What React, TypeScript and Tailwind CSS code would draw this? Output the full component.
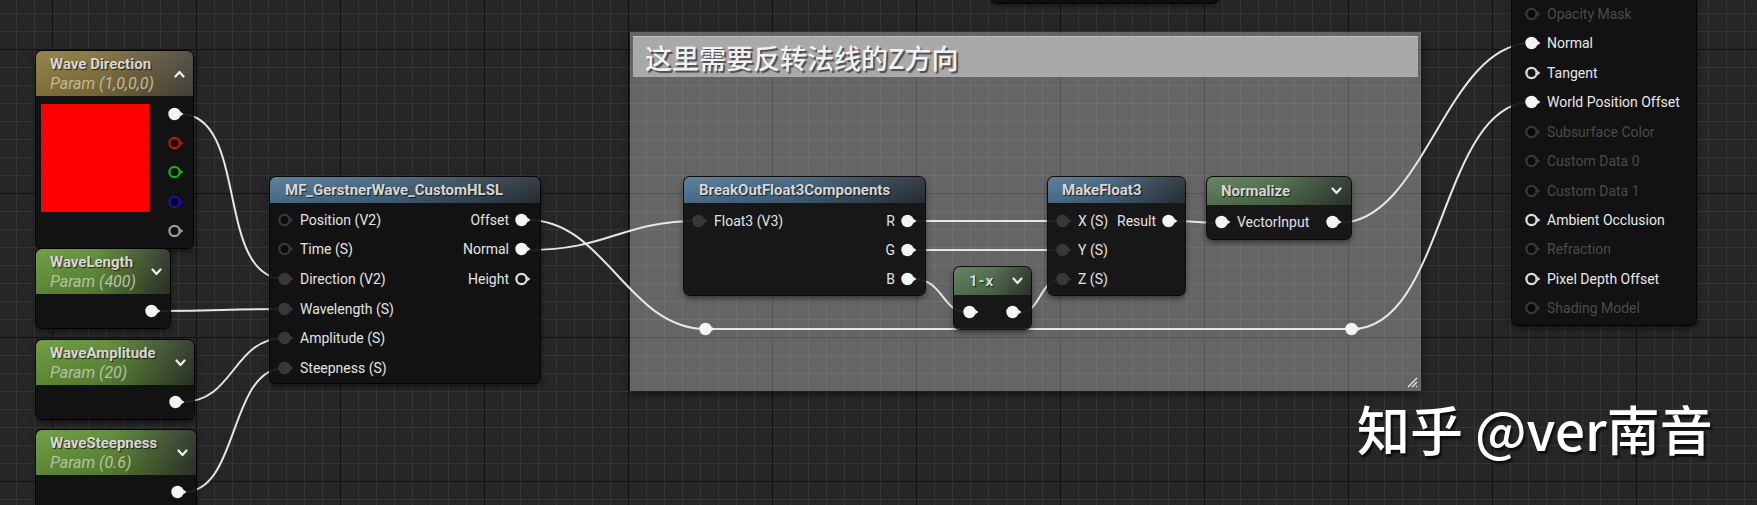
import React from "react";

type PK = "w" | "wr" | "d" | "dr" | "r" | "g" | "b" | "gr";

const PIN: Record<PK, { fill: string; stroke: string; arrow: string; sw: number }> = {
  w: { fill: "#f4f4f4", stroke: "#f4f4f4", arrow: "#f4f4f4", sw: 0 },
  wr: { fill: "#151515", stroke: "#dcdcdc", arrow: "#dcdcdc", sw: 2.3 },
  d: { fill: "#383838", stroke: "#383838", arrow: "#383838", sw: 0 },
  dr: { fill: "#0b0b0b", stroke: "#383838", arrow: "#383838", sw: 2.3 },
  r: { fill: "#120303", stroke: "#c41212", arrow: "#c41212", sw: 2.3 },
  g: { fill: "#031203", stroke: "#12b012", arrow: "#12b012", sw: 2.3 },
  b: { fill: "#030312", stroke: "#1212b4", arrow: "#1212b4", sw: 2.3 },
  gr: { fill: "#131313", stroke: "#9c9c9c", arrow: "#9c9c9c", sw: 2.3 },
};

function Pin({ k }: { k: PK }) {
  const c = PIN[k];
  return (
    <svg width="16" height="14" viewBox="0 0 16 14" className="block shrink-0">
      <circle cx="6.5" cy="7" r={c.sw ? 5.1 : 6.2} fill={c.fill} stroke={c.stroke} strokeWidth={c.sw} />
      <path d="M12.2 4.4 L15.4 7 L12.2 9.6 Z" fill={c.arrow} />
    </svg>
  );
}

function Chevron({ up }: { up?: boolean }) {
  return (
    <svg width="11" height="8" viewBox="0 0 11 8" className="block shrink-0">
      <path
        d={up ? "M1.5 6.5 L5.5 2 L9.5 6.5" : "M1.5 1.5 L5.5 6 L9.5 1.5"}
        fill="none"
        stroke="#ececec"
        strokeWidth="2.2"
        strokeLinecap="round"
        strokeLinejoin="round"
      />
    </svg>
  );
}

function InRow({ k, label, h }: { k: PK; label: string; h: string }) {
  return (
    <div className={`flex items-center gap-[6px] ${h}`}>
      <Pin k={k} />
      <span className="leading-none">{label}</span>
    </div>
  );
}

function OutRow({ k, label, h }: { k: PK; label: string; h: string }) {
  return (
    <div className={`flex items-center justify-end gap-[6px] ${h}`}>
      <span className="leading-none">{label}</span>
      <Pin k={k} />
    </div>
  );
}

const nodeBase =
  "absolute rounded-[6px] bg-[rgba(17,17,17,0.93)] shadow-[0_0_0_1px_rgba(0,0,0,0.85),0_3px_6px_rgba(0,0,0,0.55)] overflow-hidden text-[14px] text-[#e2e2e2]";

const titleCls = "font-bold text-[15px] leading-none text-[#d6d6d6] [text-shadow:1px_1px_1px_rgba(0,0,0,0.7)]";

const gradGold =
  "bg-[linear-gradient(to_bottom,rgba(255,255,255,0.07),rgba(0,0,0,0.12)),linear-gradient(to_right,#8f7d3d_0%,#80703a_40%,#4a4740_100%)]";
const gradGreen =
  "bg-[linear-gradient(to_bottom,rgba(255,255,255,0.05),rgba(0,0,0,0.14)),linear-gradient(to_right,#6a9b3d_0%,#5f8c37_45%,#30372c_100%)]";
const gradBlue =
  "bg-[linear-gradient(to_bottom,rgba(255,255,255,0.06),rgba(0,0,0,0.14)),linear-gradient(to_right,#527a99_0%,#45667f_45%,#2b333b_100%)]";
const gradMuted =
  "bg-[linear-gradient(to_bottom,rgba(255,255,255,0.05),rgba(0,0,0,0.14)),linear-gradient(to_right,#5d805a_0%,#4f6e4c_50%,#30382f_100%)]";

function ParamHeader({ title, sub, grad, up, subColor }: { title: string; sub: string; grad: string; up?: boolean; subColor: string }) {
  return (
    <div className={`h-[45px] flex items-center pl-[14px] pr-[8px] ${grad}`}>
      <div className="flex-1 flex flex-col pt-[1px]">
        <span className={`${titleCls} h-[20px] flex items-center`}>{title}</span>
        <span className={`italic text-[16px] leading-none h-[20px] flex items-center ${subColor}`}>{sub}</span>
      </div>
      <Chevron up={up} />
    </div>
  );
}

function ParamNode({ cls, title, sub }: { cls: string; title: string; sub: string }) {
  return (
    <div className={`${nodeBase} ${cls}`}>
      <ParamHeader title={title} sub={sub} grad={gradGreen} subColor="text-[#b3c2a3]" />
      <div className="h-[34px] flex items-center justify-end pr-[9px]">
        <Pin k="w" />
      </div>
    </div>
  );
}

const wires = [
  "M180 114 C250 114, 214 279, 285 279",
  "M160 311 C220 311, 225 309, 285 309",
  "M182 402 C235 402, 232 338, 285 338",
  "M184 492 C240 492, 228 368, 285 368",
  "M528 220 C605 220, 628 329, 706 329",
  "M528 250 C610 250, 620 221, 699 221",
  "M706 329 L1352 329",
  "M1352 329 C1445 329, 1440 102, 1532 102",
  "M1339 223 C1425 223, 1445 43, 1532 43",
  "M913 221 L1063 221",
  "M913 250 L1063 250",
  "M913 279 C945 279, 940 313, 970 313",
  "M1019 313 C1042 313, 1038 279, 1063 279",
  "M1174 221 C1195 221, 1200 223, 1222 223",
];

const resultRows: { label: string; k: PK; on: boolean }[] = [
  { label: "Opacity Mask", k: "dr", on: false },
  { label: "Normal", k: "w", on: true },
  { label: "Tangent", k: "wr", on: true },
  { label: "World Position Offset", k: "w", on: true },
  { label: "Subsurface Color", k: "dr", on: false },
  { label: "Custom Data 0", k: "dr", on: false },
  { label: "Custom Data 1", k: "dr", on: false },
  { label: "Ambient Occlusion", k: "wr", on: true },
  { label: "Refraction", k: "dr", on: false },
  { label: "Pixel Depth Offset", k: "wr", on: true },
  { label: "Shading Model", k: "dr", on: false },
];

export default function App() {
  return (
    <div
      className="relative w-[1757px] h-[505px] overflow-hidden font-[Roboto,sans-serif] bg-[#262626] bg-[linear-gradient(to_right,#121212_1px,transparent_1px),linear-gradient(to_bottom,#121212_1px,transparent_1px),linear-gradient(to_right,#353535_1px,transparent_1px),linear-gradient(to_bottom,#353535_1px,transparent_1px)] bg-size-[144px_144px,144px_144px,18px_18px,18px_18px] bg-position-[52px_49px,52px_49px,16px_13px,16px_13px]"
    >
      {/* top cut-off node */}
      <div className="absolute left-[991px] top-[-20px] w-[227px] h-[23px] rounded-[6px] bg-[#0e0e0e] shadow-[0_0_0_1px_rgba(0,0,0,0.8),0_2px_5px_rgba(0,0,0,0.5)]" />

      {/* comment box */}
      <div className="absolute left-[630px] top-[32px] w-[791px] h-[359px] bg-[rgba(255,255,255,0.29)] shadow-[0_3px_7px_rgba(0,0,0,0.55)] px-[3px] pt-[4px]">
        <div className="h-[41px] bg-[#a9a9a9] border-t border-[#bdbdbd] flex items-center pl-[12px] pt-[1px]">
          <span className="font-['Noto_Sans_CJK_SC',sans-serif] font-medium text-[27px] leading-none text-[#f2f2f2] [text-shadow:2px_2px_1px_rgba(0,0,0,0.55)]">
            这里需要反转法线的Z方向
          </span>
        </div>
        <svg width="12" height="12" viewBox="0 0 12 12" className="absolute right-[3px] bottom-[3px]">
          <path d="M11 2 L2 11 M11 6 L6 11 M11 10 L10 11" stroke="#e8e8e8" strokeWidth="1.3" />
        </svg>
      </div>

      {/* wires */}
      <svg width="1757" height="505" className="absolute left-0 top-0 pointer-events-none">
        {wires.map((d, i) => (
          <path key={i} d={d} fill="none" stroke="#e6e6e6" strokeWidth="2" />
        ))}
      </svg>

      {/* reroute nodes */}
      <div className="absolute left-[699px] top-[322px]">
        <Pin k="w" />
      </div>
      <div className="absolute left-[1345px] top-[322px]">
        <Pin k="w" />
      </div>

      {/* Wave Direction */}
      <div className={`${nodeBase} left-[36px] top-[51px] w-[157px] h-[197px]`}>
        <ParamHeader title="Wave Direction" sub="Param (1,0,0,0)" grad={gradGold} up subColor="text-[#c2b893]" />
        <div className="flex">
          <div className="ml-[5px] mt-[8px] w-[108px] h-[108px] bg-[#ff0000]" />
          <div className="ml-auto pr-[9px] pt-[3px] flex flex-col">
            <div className="h-[29.4px] flex items-center"><Pin k="w" /></div>
            <div className="h-[29.4px] flex items-center"><Pin k="r" /></div>
            <div className="h-[29.4px] flex items-center"><Pin k="g" /></div>
            <div className="h-[29.4px] flex items-center"><Pin k="b" /></div>
            <div className="h-[29.4px] flex items-center"><Pin k="gr" /></div>
          </div>
        </div>
      </div>

      <ParamNode cls="left-[36px] top-[249px] w-[134px] h-[79px]" title="WaveLength" sub="Param (400)" />
      <ParamNode cls="left-[36px] top-[340px] w-[158px] h-[79px]" title="WaveAmplitude" sub="Param (20)" />
      <ParamNode cls="left-[36px] top-[430px] w-[160px] h-[79px]" title="WaveSteepness" sub="Param (0.6)" />

      {/* MF_GerstnerWave_CustomHLSL */}
      <div className={`${nodeBase} left-[270px] top-[177px] w-[270px] h-[206px]`}>
        <div className={`h-[26px] flex items-center pl-[15px] ${gradBlue}`}>
          <span className={titleCls}>MF_GerstnerWave_CustomHLSL</span>
        </div>
        <div className="flex justify-between pt-[2px]">
          <div className="flex flex-col pl-[8px]">
            <InRow k="dr" label="Position (V2)" h="h-[29.6px]" />
            <InRow k="dr" label="Time (S)" h="h-[29.6px]" />
            <InRow k="d" label="Direction (V2)" h="h-[29.6px]" />
            <InRow k="d" label="Wavelength (S)" h="h-[29.6px]" />
            <InRow k="d" label="Amplitude (S)" h="h-[29.6px]" />
            <InRow k="d" label="Steepness (S)" h="h-[29.6px]" />
          </div>
          <div className="flex flex-col pr-[9px]">
            <OutRow k="w" label="Offset" h="h-[29.6px]" />
            <OutRow k="w" label="Normal" h="h-[29.6px]" />
            <OutRow k="wr" label="Height" h="h-[29.6px]" />
          </div>
        </div>
      </div>

      {/* BreakOutFloat3Components */}
      <div className={`${nodeBase} left-[684px] top-[177px] w-[241px] h-[118px]`}>
        <div className={`h-[26px] flex items-center pl-[15px] ${gradBlue}`}>
          <span className={titleCls}>BreakOutFloat3Components</span>
        </div>
        <div className="flex justify-between pt-[3px]">
          <div className="flex flex-col pl-[8px]">
            <InRow k="d" label="Float3 (V3)" h="h-[29.2px]" />
          </div>
          <div className="flex flex-col pr-[8px]">
            <OutRow k="w" label="R" h="h-[29.2px]" />
            <OutRow k="w" label="G" h="h-[29.2px]" />
            <OutRow k="w" label="B" h="h-[29.2px]" />
          </div>
        </div>
      </div>

      {/* MakeFloat3 */}
      <div className={`${nodeBase} left-[1048px] top-[177px] w-[137px] h-[118px]`}>
        <div className={`h-[26px] flex items-center pl-[14px] ${gradBlue}`}>
          <span className={titleCls}>MakeFloat3</span>
        </div>
        <div className="flex justify-between pt-[3px]">
          <div className="flex flex-col pl-[8px]">
            <InRow k="d" label="X (S)" h="h-[29.2px]" />
            <InRow k="d" label="Y (S)" h="h-[29.2px]" />
            <InRow k="d" label="Z (S)" h="h-[29.2px]" />
          </div>
          <div className="flex flex-col pr-[7px]">
            <OutRow k="w" label="Result" h="h-[29.2px]" />
          </div>
        </div>
      </div>

      {/* Normalize */}
      <div className={`${nodeBase} left-[1207px] top-[177px] w-[144px] h-[62px]`}>
        <div className={`h-[28px] flex items-center pl-[14px] pr-[9px] ${gradMuted}`}>
          <span className={`${titleCls} flex-1`}>Normalize</span>
          <Chevron />
        </div>
        <div className="h-[34px] flex items-center justify-between pl-[8px] pr-[9px]">
          <div className="flex items-center gap-[6px]">
            <Pin k="w" />
            <span className="leading-none">VectorInput</span>
          </div>
          <Pin k="w" />
        </div>
      </div>

      {/* 1-x */}
      <div className={`${nodeBase} left-[954px] top-[267px] w-[77px] h-[62px]`}>
        <div className={`h-[28px] flex items-center pl-[15px] pr-[8px] ${gradMuted}`}>
          <span className={`${titleCls} flex-1 tracking-[1px]`}>1-x</span>
          <Chevron />
        </div>
        <div className="h-[34px] flex items-center justify-between pl-[9px] pr-[9px]">
          <Pin k="w" />
          <Pin k="w" />
        </div>
      </div>

      {/* Material result node */}
      <div className={`${nodeBase} left-[1512px] top-[-20px] w-[184px] h-[345px] bg-[rgba(16,16,16,0.95)]`}>
        <div className="flex flex-col pl-[13px] pt-[19.3px]">
          {resultRows.map((r) => (
            <div key={r.label} className="h-[29.43px] flex items-center gap-[6px]">
              <Pin k={r.k} />
              <span className={`leading-none ${r.on ? "text-[#e8e8e8]" : "text-[#4a4a4a]"}`}>{r.label}</span>
            </div>
          ))}
        </div>
      </div>

      {/* watermark */}
      <div className="absolute left-[1357px] top-[402px] font-['Noto_Sans_CJK_SC',sans-serif] font-medium text-[53px] leading-none text-white whitespace-nowrap [text-shadow:2px_3px_2px_rgba(0,0,0,0.65)]">
        知乎 @ver南音
      </div>
    </div>
  );
}
